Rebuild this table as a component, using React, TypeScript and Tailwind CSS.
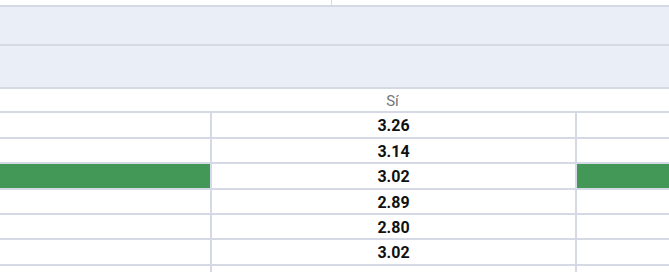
import React from "react";

const rows: { v: string; h: string; green?: boolean }[] = [
  { v: "3.26", h: "h-[26px]" },
  { v: "3.14", h: "h-[25px]" },
  { v: "3.02", h: "h-[26px]", green: true },
  { v: "2.89", h: "h-[25px]" },
  { v: "2.80", h: "h-[25px]" },
  { v: "3.02", h: "h-[26px]" },
];

export default function App() {
  return (
    <div
      className="w-[669px] h-[272px] overflow-hidden bg-white"
      style={{ fontFamily: 'Roboto, "Liberation Sans", Arial, sans-serif' }}
    >
      <div className="flex h-[5px]">
        <div className="w-[332px] border-r border-[#d6dae6]" />
        <div className="flex-1" />
      </div>
      <div className="h-[41px] bg-[#eaeef7] border-y-2 border-[#d5d9e5]" />
      <div className="h-[43px] bg-[#eaeef7] border-b-2 border-[#d5d9e5]" />
      <div className="h-[24px] flex items-center justify-center border-b-2 border-[#d5d9e5] text-[15px] text-[#767676] pl-[116px] pt-[2px]">
        Sí
      </div>
      {rows.map((r, i) => (
        <div key={i} className={`flex ${r.h} border-b-2 border-[#d5d9e5]`}>
          <div className={`w-[210px] ${r.green ? "bg-[#449857]" : ""}`} />
          <div className="w-[2px] bg-[#d5d9e5]" />
          <div className="w-[363px] flex items-center justify-center text-[16px] font-bold text-[#111] pt-[2px]">
            {r.v}
          </div>
          <div className="w-[2px] bg-[#d5d9e5]" />
          <div className={`flex-1 ${r.green ? "bg-[#449857]" : ""}`} />
        </div>
      ))}
      <div className="flex h-[10px]">
        <div className="w-[210px]" />
        <div className="w-[2px] bg-[#d5d9e5]" />
        <div className="w-[363px]" />
        <div className="w-[2px] bg-[#d5d9e5]" />
      </div>
    </div>
  );
}
